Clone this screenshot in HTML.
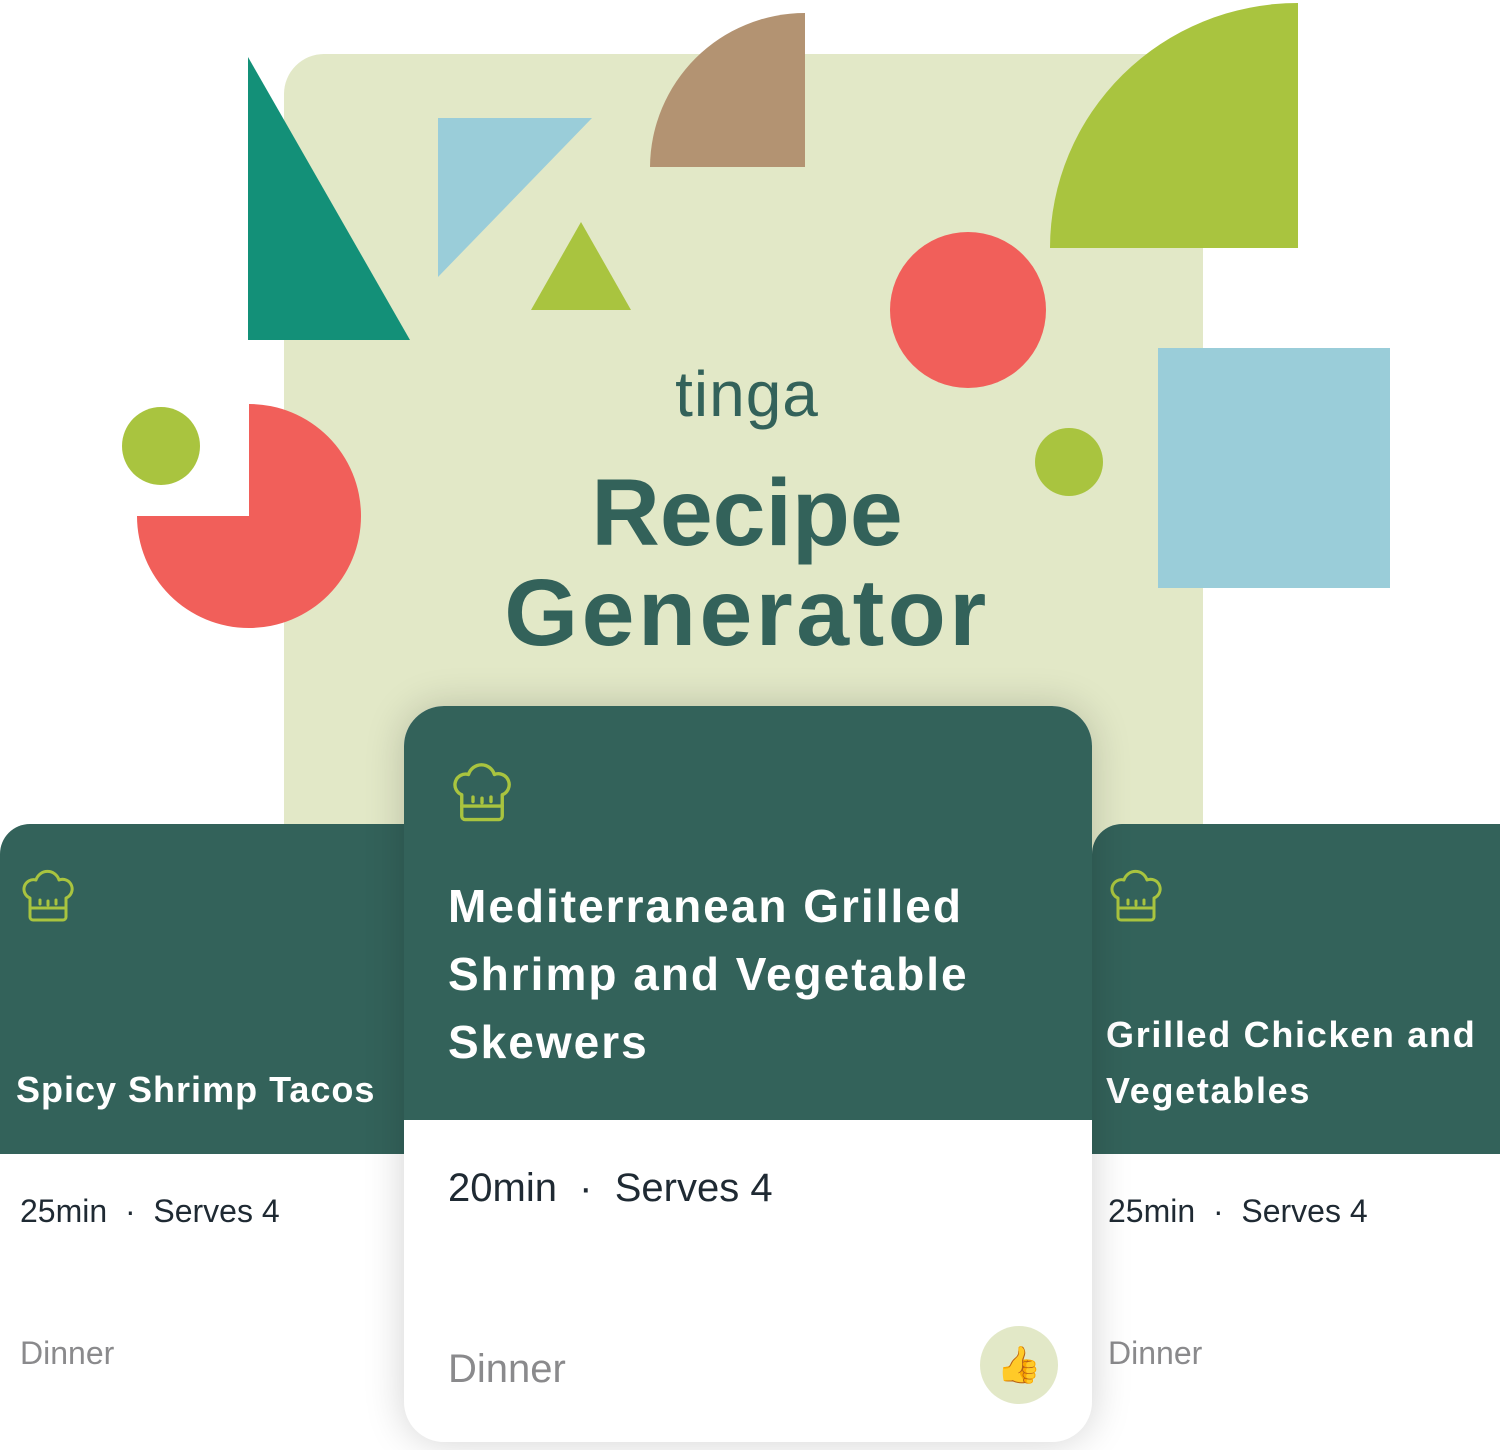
<!DOCTYPE html>
<html><head><meta charset="utf-8"><style>
*{margin:0;padding:0;box-sizing:border-box}
body{width:1500px;height:1450px;position:relative;overflow:hidden;background:#fff;font-family:"Liberation Sans",sans-serif}
.abs{position:absolute;white-space:nowrap}
.panel{position:absolute;left:284px;top:54px;width:919px;height:800px;background:#e2e8c7;border-radius:40px 40px 0 0}
.card{position:absolute;background:#fff;overflow:hidden}
.top{position:absolute;left:0;top:0;right:0;background:#33625a}
.t{color:#fff;font-weight:bold;position:absolute;white-space:nowrap}
.meta{color:#1f2a33;position:absolute;white-space:nowrap}
.din{color:#8a8a8c;position:absolute;white-space:nowrap}
</style></head><body>
<div class="panel"></div>
<svg class="abs" style="left:0;top:0" width="1500" height="850" viewBox="0 0 1500 850">
<polygon points="248,57 248,340 410,340" fill="#139078"/>
<polygon points="438,118 592,118 438,277" fill="#9acdd9"/>
<polygon points="581,222 531,310 631,310" fill="#a9c43f"/>
<path d="M805,167 L650,167 A155,155 0 0 1 805,13 Z" fill="#b39372"/>
<path d="M1298,248 L1050,248 A248,245 0 0 1 1298,3 Z" fill="#a9c43f"/>
<circle cx="968" cy="310" r="78" fill="#f15f5a"/>
<circle cx="1069" cy="462" r="34" fill="#a9c43f"/>
<rect x="1158" y="348" width="232" height="240" fill="#9acdd9"/>
<circle cx="161" cy="446" r="39" fill="#a9c43f"/>
<path d="M249,516 L249,404 A112,112 0 1 1 137,516 Z" fill="#f15f5a"/>
</svg>
<div class="abs" style="left:0;width:1494px;text-align:center;top:357px;font-size:64px;color:#33625a;letter-spacing:1px">tinga</div>
<div class="abs" style="left:0;width:1494px;text-align:center;top:459px;font-size:95px;font-weight:bold;color:#33625a">Recipe</div>
<div class="abs" style="left:0;width:1494px;text-align:center;top:559px;font-size:95px;font-weight:bold;color:#33625a;letter-spacing:3.5px">Generator</div>

<svg width="0" height="0" style="position:absolute"><defs>
<g id="hat" fill="none" stroke="#a9c43f" stroke-width="3" stroke-linecap="round" stroke-linejoin="round">
<path d="M14,48 V38 A9.5,9.5 0 0 1 20,20 A12,12 0 0 1 43,20 A9.5,9.5 0 0 1 50,38 V48"/>
<path d="M14,48 V57 A3,3 0 0 0 17,60 H47 A3,3 0 0 0 50,57 V48 Z"/>
<path d="M24,40 V44 M32,41 V45 M40,40 V44"/>
</g></defs></svg>

<div class="card" style="left:0;top:824px;width:420px;height:626px;border-radius:30px 0 0 0">
<div class="top" style="height:330px"></div>
<svg class="abs" style="left:16px;top:36px" width="64" height="64" viewBox="0 0 64 64"><use href="#hat"/></svg>
<div class="t" style="left:16px;top:248px;font-size:36px;line-height:36px;letter-spacing:1px">Spicy Shrimp Tacos</div>
<div class="meta" style="left:20px;top:371px;font-size:32px;line-height:32px">25min &nbsp;·&nbsp; Serves 4</div>
<div class="din" style="left:20px;top:513px;font-size:32px;line-height:32px">Dinner</div>
</div>

<div class="card" style="left:1092px;top:824px;width:408px;height:626px;border-radius:30px 0 0 0">
<div class="top" style="height:330px"></div>
<svg class="abs" style="left:12px;top:36px" width="64" height="64" viewBox="0 0 64 64"><use href="#hat"/></svg>
<div class="t" style="left:14px;top:183px;font-size:36px;line-height:56px;letter-spacing:1.7px">Grilled Chicken and<br>Vegetables</div>
<div class="meta" style="left:16px;top:371px;font-size:32px;line-height:32px">25min &nbsp;·&nbsp; Serves 4</div>
<div class="din" style="left:16px;top:513px;font-size:32px;line-height:32px">Dinner</div>
</div>

<div class="card" style="left:404px;top:706px;width:688px;height:736px;border-radius:40px;box-shadow:0 0 40px rgba(0,0,0,0.18)">
<div class="top" style="height:414px"></div>
<svg class="abs" style="left:42px;top:46px" width="72" height="72" viewBox="0 0 64 64"><use href="#hat"/></svg>
<div class="t" style="left:44px;top:166px;font-size:46px;line-height:68px;letter-spacing:2px">Mediterranean Grilled<br>Shrimp and Vegetable<br>Skewers</div>
<div class="meta" style="left:44px;top:462px;font-size:40px;line-height:40px">20min &nbsp;·&nbsp; Serves 4</div>
<div class="din" style="left:44px;top:643px;font-size:40px;line-height:40px">Dinner</div>
<div class="abs" style="left:576px;top:620px;width:78px;height:78px;border-radius:50%;background:#e2e8c7;text-align:center;font-size:36px;line-height:78px">👍</div>
</div>
</body></html>
